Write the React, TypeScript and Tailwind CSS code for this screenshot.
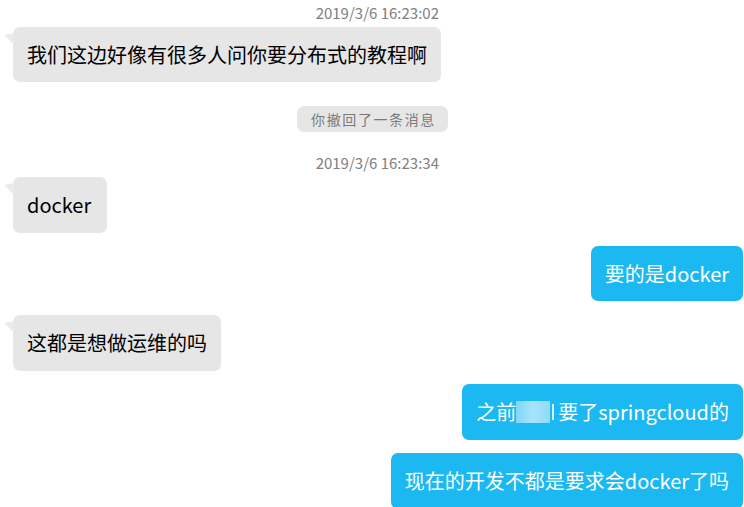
import React from "react";

const font = { fontFamily: '"Noto Sans CJK SC", "Noto Sans", sans-serif' };

function Tail() {
  return (
    <svg className="absolute left-[-9px] top-[6px]" width="10" height="12" viewBox="0 0 10 12">
      <polygon points="0,2 10,0 10,12" fill="#ebebeb" />
    </svg>
  );
}

function Left({ children, h = "h-[55px]", mt, px = "px-[14px]" }: { children: React.ReactNode; h?: string; mt: string; px?: string }) {
  return (
    <div className={`flex pl-[13px] ${mt}`}>
      <div className={`relative flex items-center ${h} rounded-[7px] bg-[#e6e6e6] ${px} text-[20px] text-black`}>
        <Tail />
        <span className="leading-none">{children}</span>
      </div>
    </div>
  );
}

function Right({ children, h = "h-[55px]", mt }: { children: React.ReactNode; h?: string; mt: string }) {
  return (
    <div className={`flex justify-end pr-[1px] ${mt}`}>
      <div className={`flex items-center ${h} rounded-[7px] bg-[#1bb8f2] px-[14px] text-[20px] text-white`}>
        <span className="flex items-center leading-none">{children}</span>
      </div>
    </div>
  );
}

function Stamp({ children, mt }: { children: React.ReactNode; mt: string }) {
  return (
    <div className={`flex h-[20px] items-center justify-end pr-[305px] text-[15px] leading-none text-[#808080] ${mt}`}>
      {children}
    </div>
  );
}

export default function App() {
  return (
    <div className="h-[507px] w-[744px] overflow-hidden bg-white" style={font}>
      <div className="flex flex-col pt-[2px]">
        <Stamp mt="mt-0">2019/3/6 16:23:02</Stamp>
        <Left mt="mt-[5px]">我们这边好像有很多人问你要分布式的教程啊</Left>
        <div className="mt-[24px] flex justify-center pl-[1px]">
          <div className="flex h-[26px] items-center rounded-[7px] bg-[#e6e6e6] pl-[14px] pr-[12px] text-[14px] leading-none tracking-[1.6px] text-[#7a7a7a]">
            你撤回了一条消息
          </div>
        </div>
        <Stamp mt="mt-[20px]">2019/3/6 16:23:34</Stamp>
        <Left mt="mt-[5px]" h="h-[56px]" px="pl-[14px] pr-[16px]">docker</Left>
        <Right mt="mt-[13px]">要的是docker</Right>
        <Left mt="mt-[14px]" h="h-[56px]">这都是想做运维的吗</Left>
        <Right mt="mt-[13px]" h="h-[56px]">
          之前
          <span className="inline-block h-[22px] w-[34px] bg-gradient-to-r from-[#7fd6f7] via-[#a9e4fa] to-[#8fdaf8]"></span>
          <span className="ml-[2px] mr-[4px] inline-block h-[16px] w-[2px] bg-[#d8f3fd]"></span>
          要了springcloud的
        </Right>
        <Right mt="mt-[13px]" h="h-[56px]">现在的开发不都是要求会docker了吗</Right>
      </div>
    </div>
  );
}
